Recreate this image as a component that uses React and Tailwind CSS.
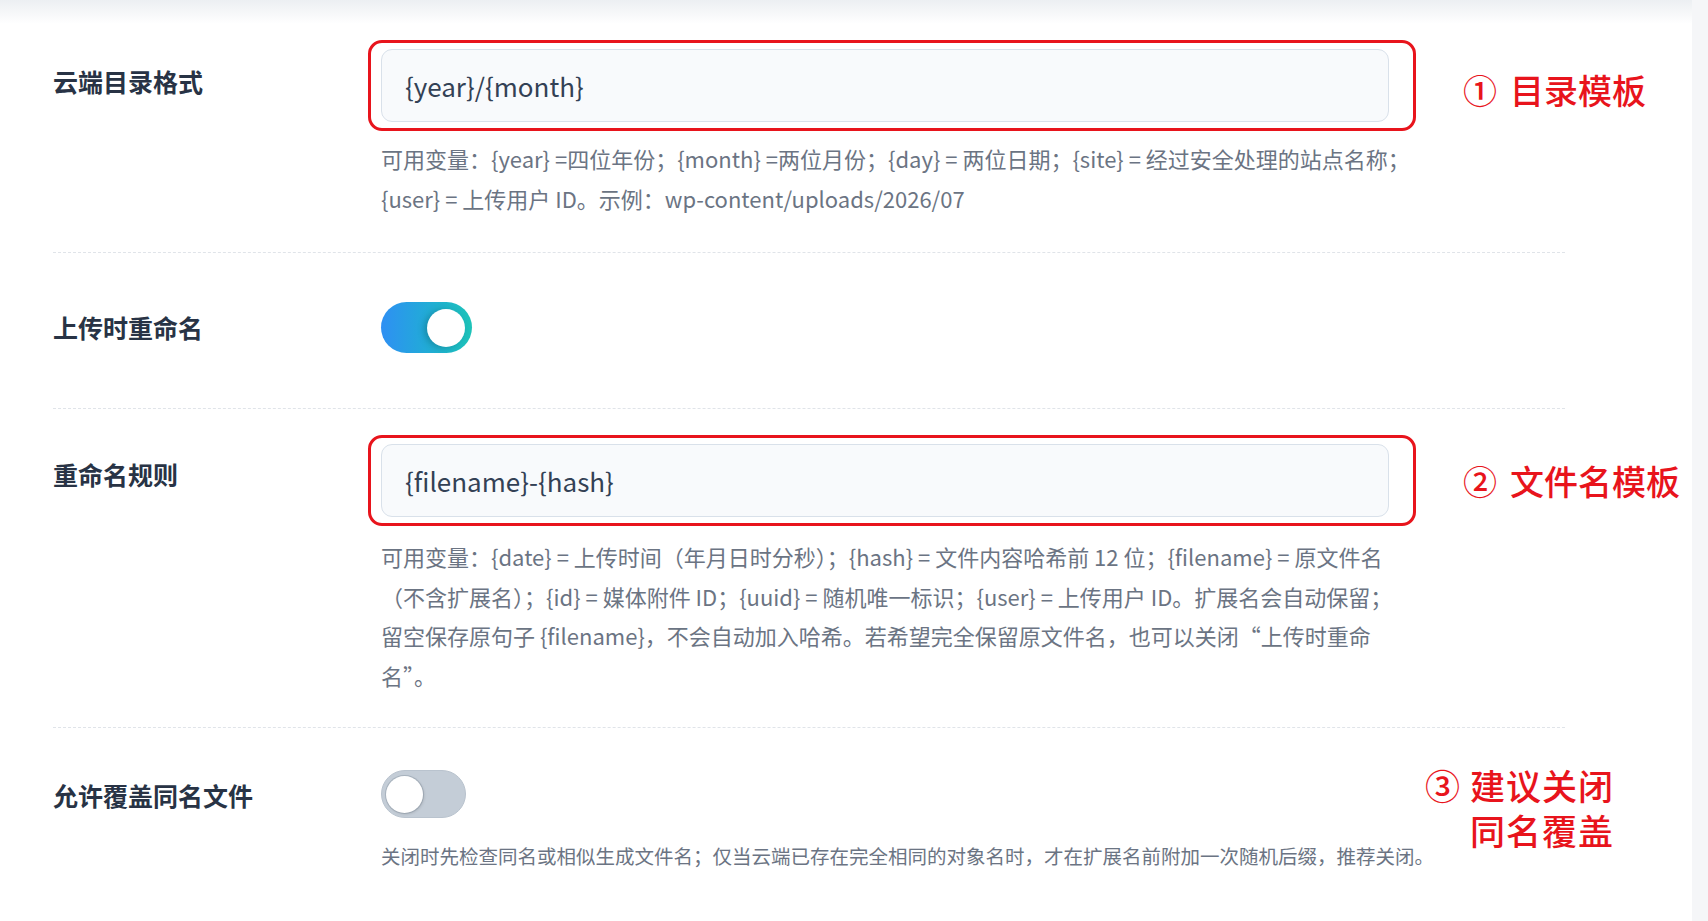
import React from 'react';

function Label({ text, top }) {
    return (
        <div className={"w-[328px] shrink-0 text-[25px] leading-[36px] font-bold text-[#283345] " + top}>
            {text}
        </div>
    );
}

function MarkedInput({ value }) {
    return (
        <div className="w-fit -ml-[13px] -my-[9px] pl-[10px] pr-[24px] py-[6px] border-[3px] border-[#e8141c] rounded-[14px]">
            <div className="w-[1008px] h-[73px] flex items-center pl-[23px] bg-[#f8fafc] border border-[#d9e1ea] rounded-[11px] text-[26px] text-[#334155]">
                {value}
            </div>
        </div>
    );
}

function Note({ num, text, className }) {
    return (
        <div className={"flex items-center text-[34px] leading-[40px] font-medium text-[#e8141c] whitespace-nowrap " + className}>
            <span>{num}</span>
            <span className="ml-[13px]">{text}</span>
        </div>
    );
}

function Toggle({ on }) {
    if (on) {
        return (
            <div className="w-[91px] h-[51px] rounded-full bg-gradient-to-r from-[#2f8ff3] to-[#1ec3b8] flex items-center justify-end pr-[7px]">
                <div className="w-[38px] h-[38px] rounded-full bg-white shadow-[-3px_1px_6px_rgba(10,80,90,0.35)]" />
            </div>
        );
    }
    return (
        <div className="w-[85px] h-[48px] rounded-full bg-[#c4cdd7] border border-[#b9c3ce] flex items-center pl-[4px]">
            <div className="w-[37px] h-[37px] rounded-full bg-white shadow-[0_0_0_1px_rgba(120,135,150,0.35),1px_1px_3px_rgba(0,0,0,0.15)]" />
        </div>
    );
}

function Divider() {
    return <div className="ml-[53px] w-[1512px] border-t border-dashed border-[#e0e4e9]" />;
}

export default class App extends React.Component {
    render() {
        return (
            <div className="flex min-h-screen font-['Noto_Sans_CJK_SC','Noto_Sans',sans-serif]">
                <div className="w-[1692px] shrink-0 bg-[linear-gradient(to_bottom,#eceff2,#ffffff_24px)] pt-[49px]">

                    {/* 云端目录格式 */}
                    <div className="flex pl-[53px] pb-[34px]">
                        <Label text="云端目录格式" top="pt-[14px]" />
                        <div>
                            <div className="flex items-center">
                                <MarkedInput value="{year}/{month}" />
                                <Note className="ml-[47px] mt-[8px]" num="①" text="目录模板" />
                            </div>
                            <div className="w-[1034px] mt-[16px] text-[22px] leading-[40px] text-[#6b7483]">
                                可用变量：{'{year}'} =四位年份；{'{month}'} =两位月份；{'{day}'} = 两位日期；{'{site}'} = 经过安全处理的站点名称；{'{user}'} = 上传用户 ID。示例：wp-content/uploads/2026/07
                            </div>
                        </div>
                    </div>
                    <Divider />

                    {/* 上传时重命名 */}
                    <div className="flex pl-[53px] pt-[49px] pb-[55px]">
                        <Label text="上传时重命名" top="pt-[7px]" />
                        <Toggle on />
                    </div>
                    <Divider />

                    {/* 重命名规则 */}
                    <div className="flex pl-[53px] pt-[35px] pb-[32px]">
                        <Label text="重命名规则" top="pt-[12px]" />
                        <div>
                            <div className="flex items-center">
                                <MarkedInput value="{filename}-{hash}" />
                                <Note className="ml-[47px]" num="②" text="文件名模板" />
                            </div>
                            <div className="w-[1026px] mt-[20px] text-[22px] leading-[39.5px] text-[#6b7483]">
                                可用变量：{'{date}'} = 上传时间（年月日时分秒）；{'{hash}'} = 文件内容哈希前 12 位；{'{filename}'} = 原文件名（不含扩展名）；{'{id}'} = 媒体附件 ID；{'{uuid}'} = 随机唯一标识；{'{user}'} = 上传用户 ID。扩展名会自动保留；留空保存原句子 {'{filename}'}，不会自动加入哈希。若希望完全保留原文件名，也可以关闭“上传时重命名”。
                            </div>
                        </div>
                    </div>
                    <Divider />

                    {/* 允许覆盖同名文件 */}
                    <div className="flex pl-[53px] pt-[42px] pb-[40px]">
                        <Label text="允许覆盖同名文件" top="pt-[7px]" />
                        <div className="flex">
                            <div className="w-[1043px]">
                                <Toggle on={false} />
                                <div className="mt-[23px] text-[19.5px] leading-[30px] text-[#6b7483] whitespace-nowrap">
                                    关闭时先检查同名或相似生成文件名；仅当云端已存在完全相同的对象名时，才在扩展名前附加一次随机后缀，推荐关闭。
                                </div>
                            </div>
                            <div className="w-[190px] -mt-[8px] text-right text-[35px] leading-[45px] font-medium text-[#e8141c] tracking-[1px]">
                                <div>③ 建议关闭</div>
                                <div>同名覆盖</div>
                            </div>
                        </div>
                    </div>
                </div>
                <div className="flex-1 bg-[#f5f6f8]" />
            </div>
        );
    }
}
